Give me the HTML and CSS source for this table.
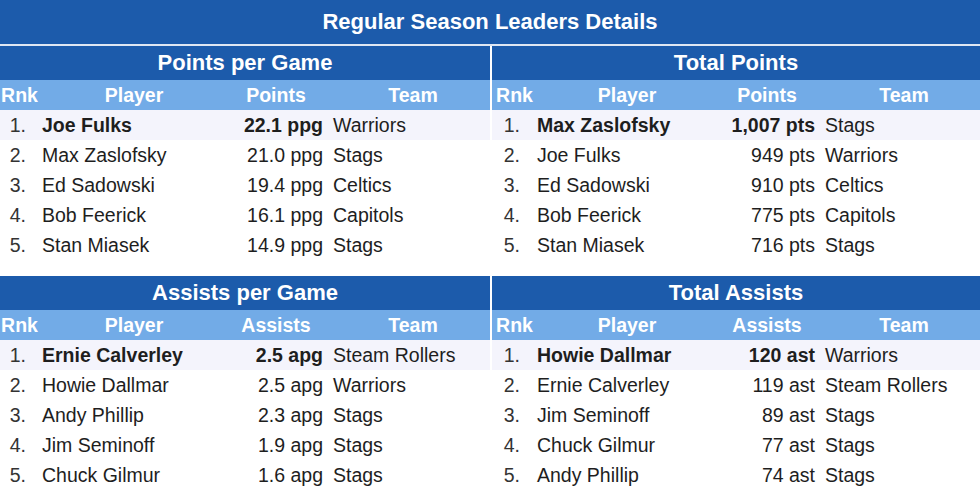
FILE: index.html
```html
<!DOCTYPE html>
<html>
<head>
<meta charset="utf-8">
<link rel="stylesheet" href="styles.css">
</head>
<body>
<div class="page">
  <div class="title">Regular Season Leaders Details</div>
  <div class="panels">
    <div class="panel left">
      <div class="phead">Points per Game</div>
      <div class="row colhead"><div class="c-rnk">Rnk</div><div class="c-player">Player</div><div class="c-val">Points</div><div class="c-team">Team</div></div>
      <div class="row lead"><div class="c-rnk">1.</div><div class="c-player">Joe Fulks</div><div class="c-val">22.1 ppg</div><div class="c-team">Warriors</div></div>
      <div class="row"><div class="c-rnk">2.</div><div class="c-player">Max Zaslofsky</div><div class="c-val">21.0 ppg</div><div class="c-team">Stags</div></div>
      <div class="row"><div class="c-rnk">3.</div><div class="c-player">Ed Sadowski</div><div class="c-val">19.4 ppg</div><div class="c-team">Celtics</div></div>
      <div class="row"><div class="c-rnk">4.</div><div class="c-player">Bob Feerick</div><div class="c-val">16.1 ppg</div><div class="c-team">Capitols</div></div>
      <div class="row"><div class="c-rnk">5.</div><div class="c-player">Stan Miasek</div><div class="c-val">14.9 ppg</div><div class="c-team">Stags</div></div>
    </div>
    <div class="panel right">
      <div class="phead">Total Points</div>
      <div class="row colhead"><div class="c-rnk">Rnk</div><div class="c-player">Player</div><div class="c-val">Points</div><div class="c-team">Team</div></div>
      <div class="row lead"><div class="c-rnk">1.</div><div class="c-player">Max Zaslofsky</div><div class="c-val">1,007 pts</div><div class="c-team">Stags</div></div>
      <div class="row"><div class="c-rnk">2.</div><div class="c-player">Joe Fulks</div><div class="c-val">949 pts</div><div class="c-team">Warriors</div></div>
      <div class="row"><div class="c-rnk">3.</div><div class="c-player">Ed Sadowski</div><div class="c-val">910 pts</div><div class="c-team">Celtics</div></div>
      <div class="row"><div class="c-rnk">4.</div><div class="c-player">Bob Feerick</div><div class="c-val">775 pts</div><div class="c-team">Capitols</div></div>
      <div class="row"><div class="c-rnk">5.</div><div class="c-player">Stan Miasek</div><div class="c-val">716 pts</div><div class="c-team">Stags</div></div>
    </div>
    <div class="panel left">
      <div class="phead">Assists per Game</div>
      <div class="row colhead"><div class="c-rnk">Rnk</div><div class="c-player">Player</div><div class="c-val">Assists</div><div class="c-team">Team</div></div>
      <div class="row lead"><div class="c-rnk">1.</div><div class="c-player">Ernie Calverley</div><div class="c-val">2.5 apg</div><div class="c-team">Steam Rollers</div></div>
      <div class="row"><div class="c-rnk">2.</div><div class="c-player">Howie Dallmar</div><div class="c-val">2.5 apg</div><div class="c-team">Warriors</div></div>
      <div class="row"><div class="c-rnk">3.</div><div class="c-player">Andy Phillip</div><div class="c-val">2.3 apg</div><div class="c-team">Stags</div></div>
      <div class="row"><div class="c-rnk">4.</div><div class="c-player">Jim Seminoff</div><div class="c-val">1.9 apg</div><div class="c-team">Stags</div></div>
      <div class="row"><div class="c-rnk">5.</div><div class="c-player">Chuck Gilmur</div><div class="c-val">1.6 apg</div><div class="c-team">Stags</div></div>
    </div>
    <div class="panel right">
      <div class="phead">Total Assists</div>
      <div class="row colhead"><div class="c-rnk">Rnk</div><div class="c-player">Player</div><div class="c-val">Assists</div><div class="c-team">Team</div></div>
      <div class="row lead"><div class="c-rnk">1.</div><div class="c-player">Howie Dallmar</div><div class="c-val">120 ast</div><div class="c-team">Warriors</div></div>
      <div class="row"><div class="c-rnk">2.</div><div class="c-player">Ernie Calverley</div><div class="c-val">119 ast</div><div class="c-team">Steam Rollers</div></div>
      <div class="row"><div class="c-rnk">3.</div><div class="c-player">Jim Seminoff</div><div class="c-val">89 ast</div><div class="c-team">Stags</div></div>
      <div class="row"><div class="c-rnk">4.</div><div class="c-player">Chuck Gilmur</div><div class="c-val">77 ast</div><div class="c-team">Stags</div></div>
      <div class="row"><div class="c-rnk">5.</div><div class="c-player">Andy Phillip</div><div class="c-val">74 ast</div><div class="c-team">Stags</div></div>
    </div>
  </div>
</div>
</body>
</html>
```

FILE: styles.css
```css
html, body {
  margin: 0;
  padding: 0;
  background: #ffffff;
}
body {
  font-family: "Liberation Sans", Arial, sans-serif;
  color: #1e1e1e;
}
.page {
  width: 980px;
}
.title {
  height: 44px;
  line-height: 44px;
  background: #1c5bab;
  color: #ffffff;
  font-weight: bold;
  font-size: 22px;
  text-align: center;
  border-bottom: 2px solid #dfe7f3;
}
.panels {
  display: grid;
  grid-template-columns: 490px 488px;
  column-gap: 2px;
  row-gap: 16px;
}
.phead {
  height: 34px;
  line-height: 34px;
  background: #1c5bab;
  color: #ffffff;
  font-weight: bold;
  font-size: 22px;
  text-align: center;
}
.row {
  display: grid;
  height: 30px;
  line-height: 30px;
  font-size: 19.5px;
  white-space: nowrap;
}
.left .row {
  grid-template-columns: 38px 192px 100px 160px;
}
.right .row {
  grid-template-columns: 44px 182px 104px 158px;
}
.row.colhead {
  background: #72abe7;
  color: #ffffff;
  font-weight: bold;
  font-size: 19.5px;
}
.row.lead {
  background: #f4f4fc;
  font-weight: bold;
}
.row.lead .c-rnk,
.row.lead .c-team {
  font-weight: normal;
}
.c-rnk {
  text-align: right;
  padding-right: 12px;
  color: #333333;
}
.right .c-rnk {
  padding-right: 16px;
}
.c-player {
  padding-left: 4px;
}
.right .c-player {
  padding-left: 1px;
}
.c-val {
  text-align: right;
  padding-right: 7px;
}
.c-team {
  padding-left: 3px;
}
.colhead > div {
  text-align: center;
  color: #ffffff;
}
.colhead .c-rnk,
.right .colhead .c-rnk {
  padding: 0 0 0 1px;
}
.colhead .c-player,
.right .colhead .c-player {
  padding: 0;
}
.colhead .c-val {
  padding-right: 8px;
}
.right .colhead .c-val {
  padding-right: 6px;
}
.colhead .c-team {
  padding-left: 6px;
}
```
